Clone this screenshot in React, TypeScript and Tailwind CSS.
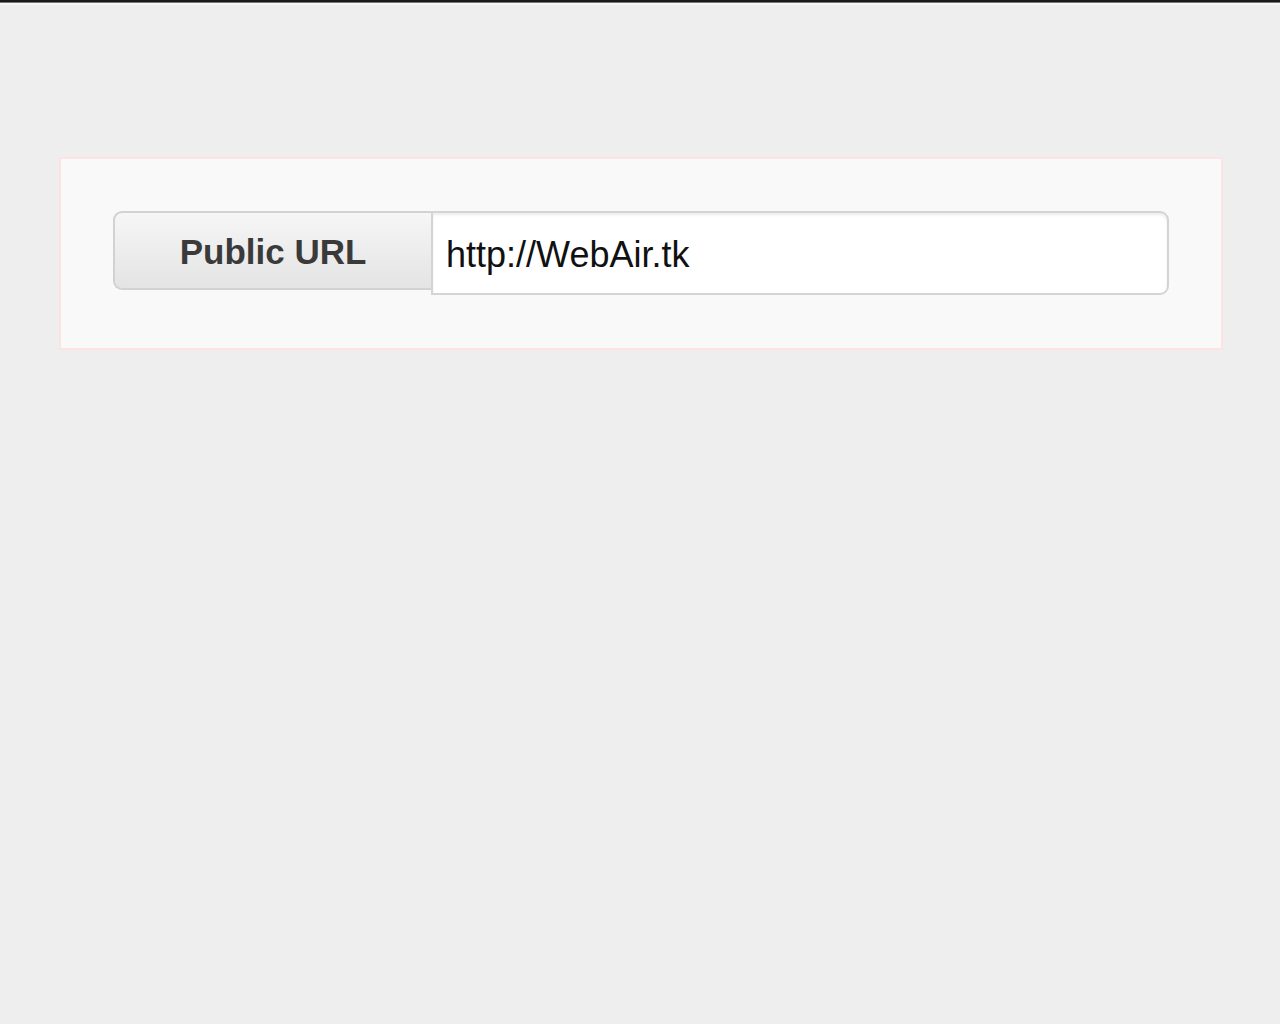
import React from "react";

export default function App() {
  return (
    <div className="min-h-[1024px] w-[1280px] bg-[#eeeeee]" style={{ fontFamily: '"Liberation Sans", Arial, sans-serif' }}>
      <div className="h-[2px] bg-[#1a1a1a]" />
      <div className="h-[1px] bg-[#777777]" />
      <div className="h-[2px] bg-[#f7f7f7]" />
      <div className="pt-[152px] pl-[59px]">
        <div className="w-[1164px] h-[193px] border-2 border-[#fde3e3] bg-[#f9f9f9] px-[52px] pt-[52px]">
          <div className="flex items-start">
            <div className="w-[318px] h-[79px] flex items-center justify-center rounded-l-[9px] border-2 border-r-0 border-[#d2d2d2] bg-gradient-to-b from-[#f6f6f6] to-[#e4e4e4] pt-[3px] text-[35px] font-bold text-[#3a3a3a]">
              Public URL
            </div>
            <div className="flex-1 h-[84px] flex items-center rounded-r-[9px] border-2 border-[#d4d4d4] bg-white pl-[13px] pt-[4px] text-[36px] text-[#111111] shadow-[inset_0_2px_3px_rgba(0,0,0,0.08)]">
              http://WebAir.tk
            </div>
          </div>
        </div>
      </div>
    </div>
  );
}
